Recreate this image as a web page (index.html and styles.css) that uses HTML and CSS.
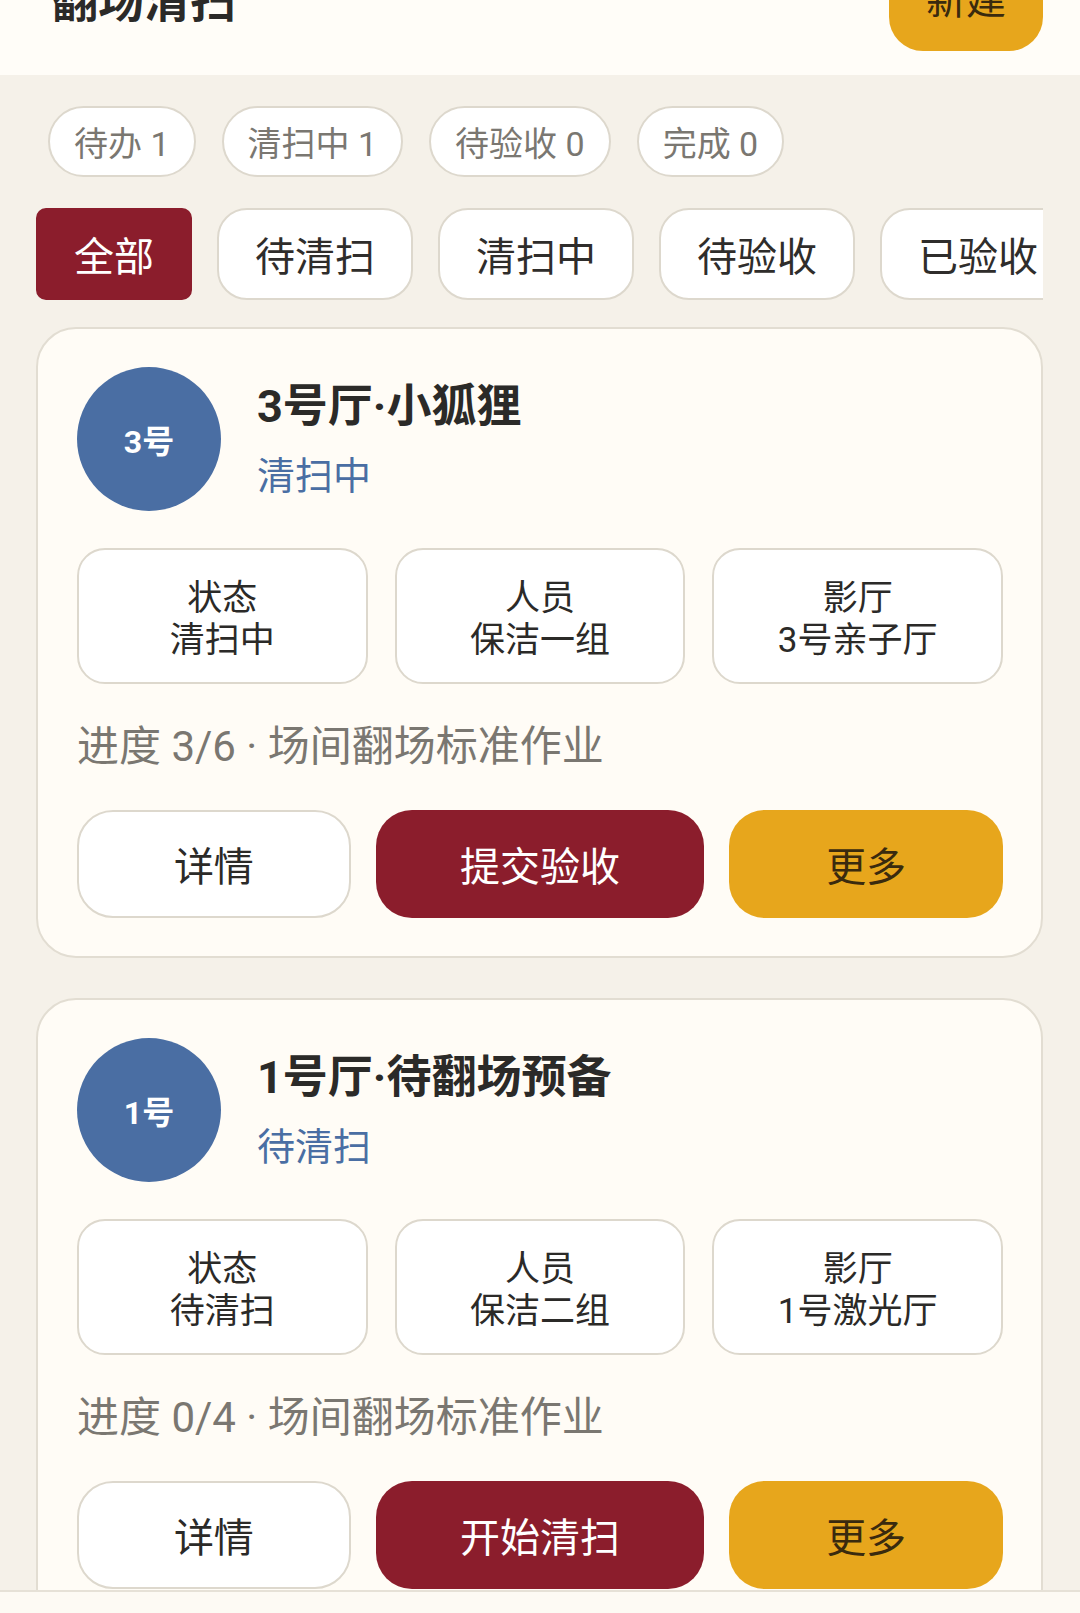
FILE: index.html
```html
<!DOCTYPE html>
<html lang="zh-CN">
<head>
  <meta charset="UTF-8" />
  <title>翻场清扫</title>
  <link rel="stylesheet" href="styles.css">
</head>

<body>
  <div class="app">
    <header class="top-bar">
      <h1 class="page-title">翻场清扫</h1>
      <button class="btn-new">新建</button>
    </header>

    <main class="content">
      <div class="stats">
        <span class="stat-chip">待办 1</span>
        <span class="stat-chip">清扫中 1</span>
        <span class="stat-chip">待验收 0</span>
        <span class="stat-chip">完成 0</span>
      </div>

      <div class="tabs">
        <button class="tab active">全部</button>
        <button class="tab">待清扫</button>
        <button class="tab">清扫中</button>
        <button class="tab">待验收</button>
        <button class="tab">已验收</button>
      </div>

      <div class="task-list">
        <div class="task-card">
          <div class="task-head">
            <div class="hall-badge">3号</div>
            <div class="task-title-wrap">
              <div class="task-title">3号厅·小狐狸</div>
              <div class="task-status">清扫中</div>
            </div>
          </div>
          <div class="info-grid">
            <div class="info-box"><div>状态</div><div>清扫中</div></div>
            <div class="info-box"><div>人员</div><div>保洁一组</div></div>
            <div class="info-box"><div>影厅</div><div>3号亲子厅</div></div>
          </div>
          <div class="progress">进度 3/6 · 场间翻场标准作业</div>
          <div class="actions">
            <button class="btn btn-plain">详情</button>
            <button class="btn btn-primary">提交验收</button>
            <button class="btn btn-more">更多</button>
          </div>
        </div>

        <div class="task-card">
          <div class="task-head">
            <div class="hall-badge">1号</div>
            <div class="task-title-wrap">
              <div class="task-title">1号厅·待翻场预备</div>
              <div class="task-status">待清扫</div>
            </div>
          </div>
          <div class="info-grid">
            <div class="info-box"><div>状态</div><div>待清扫</div></div>
            <div class="info-box"><div>人员</div><div>保洁二组</div></div>
            <div class="info-box"><div>影厅</div><div>1号激光厅</div></div>
          </div>
          <div class="progress">进度 0/4 · 场间翻场标准作业</div>
          <div class="actions">
            <button class="btn btn-plain">详情</button>
            <button class="btn btn-primary">开始清扫</button>
            <button class="btn btn-more">更多</button>
          </div>
        </div>
      </div>
    </main>
  </div>

  <nav class="bottom-bar"></nav>
</body>
</html>
```

FILE: styles.css
```css
body {
  margin: 0;
  background-color: #f5f1e9;
  font-family: Roboto, "Noto Sans CJK SC", sans-serif;
  color: #2b2a28;
  overflow: hidden;
}

button {
  font-family: inherit;
  cursor: pointer;
}

/* page is shown scrolled a little, header half out of view */
.app {
  margin-top: -81px;
}

.top-bar {
  display: flex;
  align-items: center;
  justify-content: space-between;
  padding: 24px 37px 24px 52px;
  background-color: #fffdf8;
}

.page-title {
  margin: 0;
  font-size: 46px;
  font-weight: 700;
  color: #2b2a28;
}

.btn-new {
  height: 108px;
  padding: 0 37px;
  border: none;
  border-radius: 34px;
  background-color: #e7a61c;
  color: #3a2a0e;
  font-size: 40px;
}

.content {
  padding: 0 37px 0 36px;
}

.stats {
  display: flex;
  gap: 26px;
  margin-top: 31px;
  padding-left: 12px;
}

.stat-chip {
  display: flex;
  align-items: center;
  height: 67px;
  padding: 0 24px;
  border: 2px solid #ddd8cd;
  border-radius: 36px;
  background-color: #fff;
  color: #7a7771;
  font-size: 34px;
  white-space: nowrap;
}

.tabs {
  display: flex;
  gap: 25px;
  margin-top: 31px;
  overflow-x: auto;
  scrollbar-width: none;
}

.tab {
  flex-shrink: 0;
  height: 92px;
  padding: 0 36px;
  border: 2px solid #ddd8cd;
  border-radius: 30px;
  background-color: #fff;
  color: #2f2d2b;
  font-size: 40px;
}

.tab.active {
  border-color: #8b1d2c;
  border-radius: 10px;
  background-color: #8b1d2c;
  color: #fff;
}

.task-list {
  display: flex;
  flex-direction: column;
  gap: 40px;
  margin-top: 27px;
}

.task-card {
  padding: 38px 38px 38px 39px;
  border: 2px solid #e2ddd2;
  border-radius: 40px;
  background-color: #fffcf6;
}

.task-head {
  display: flex;
  align-items: center;
  gap: 36px;
}

.hall-badge {
  display: flex;
  align-items: center;
  justify-content: center;
  flex-shrink: 0;
  width: 144px;
  height: 144px;
  border-radius: 50%;
  background-color: #4a6ea3;
  color: #fff;
  font-size: 32px;
  font-weight: 700;
}

.task-title {
  font-size: 45px;
  font-weight: 700;
  line-height: 57px;
  margin-bottom: 17px;
}

.task-status {
  font-size: 38px;
  line-height: 48px;
  color: #4a6ea3;
}

.info-grid {
  display: grid;
  grid-template-columns: repeat(3, 1fr);
  gap: 27px;
  margin-top: 37px;
}

.info-box {
  padding: 28px 8px 20px;
  border: 2px solid #ddd8cd;
  border-radius: 28px;
  background-color: #fff;
  text-align: center;
  font-size: 35px;
  line-height: 42px;
  color: #2b2a28;
}

.progress {
  margin-top: 37px;
  font-size: 42px;
  line-height: 52px;
  color: #7a7771;
}

.actions {
  display: grid;
  grid-template-columns: 1fr 1.2fr 1fr;
  gap: 25px;
  margin-top: 37px;
}

.btn {
  height: 108px;
  border: none;
  border-radius: 36px;
  font-size: 40px;
}

.btn-plain {
  border: 2px solid #ddd8cd;
  background-color: #fff;
  color: #2b2a28;
}

.btn-primary {
  background-color: #8b1d2c;
  color: #fff;
}

.btn-more {
  background-color: #e7a61c;
  color: #3a2a0e;
}

.bottom-bar {
  position: fixed;
  left: 0;
  right: 0;
  bottom: 0;
  height: 21px;
  border-top: 2px solid #e6e1d7;
  background-color: #fdfaf4;
}
```
